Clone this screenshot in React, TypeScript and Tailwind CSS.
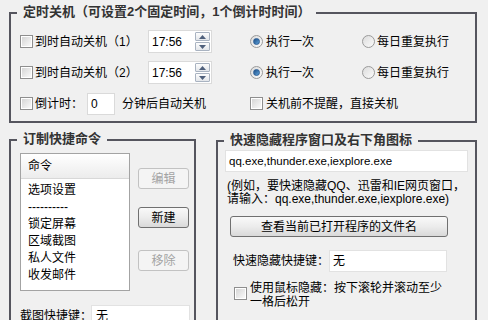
import React from "react";

const FONT = "font-['Tahoma','Liberation_Sans','Noto_Sans_CJK_SC',sans-serif]";

function Group({ title, className, children }: { title: string; className: string; children?: React.ReactNode }) {
  return (
    <div className={"relative border-2 border-[#55555e] " + className}>
      <div className="absolute left-[6px] top-[-10px] px-[6px] bg-[#f0f0f0] text-[13px] leading-[16px] font-bold text-[#333] whitespace-nowrap">
        {title}
      </div>
      {children}
    </div>
  );
}

function Checkbox() {
  return (
    <div className="w-[13px] h-[13px] shrink-0 border border-[#8e8e8e] bg-white p-[1px]">
      <div className="w-full h-full bg-gradient-to-br from-[#d6d6d6] to-[#f9f9f9]" />
    </div>
  );
}

function Radio({ checked }: { checked?: boolean }) {
  return (
    <div className="w-[13px] h-[13px] shrink-0 rounded-full border border-[#9a9a9a] bg-gradient-to-br from-[#dcdcdc] to-[#fbfbfb] flex items-center justify-center">
      {checked && (
        <div className="w-[7px] h-[7px] rounded-full bg-gradient-to-br from-[#1f4f86] to-[#5ea3dc] border border-[#2a5d96]" />
      )}
    </div>
  );
}

function Arrow({ up }: { up?: boolean }) {
  return (
    <svg width="7" height="4" viewBox="0 0 7 4">
      {up ? <path d="M0 4 L3.5 0 L7 4 Z" fill="#4f607c" /> : <path d="M0 0 L3.5 4 L7 0 Z" fill="#4f607c" />}
    </svg>
  );
}

function TimeInput() {
  return (
    <div className="w-[64px] h-[23px] shrink-0 bg-white border border-[#dadada] flex items-center justify-between">
      <span className="pl-[3px] text-[12px] leading-[14px]">17:56</span>
      <div className="flex flex-col gap-[1px] mr-[1px] w-[15px]">
        <div className="h-[9px] border border-[#a9b3c1] rounded-[1px] bg-gradient-to-b from-[#fdfdfd] to-[#e3e6ea] flex items-center justify-center">
          <Arrow up />
        </div>
        <div className="h-[9px] border border-[#a9b3c1] rounded-[1px] bg-gradient-to-b from-[#fdfdfd] to-[#e3e6ea] flex items-center justify-center">
          <Arrow />
        </div>
      </div>
    </div>
  );
}

function Btn({ label, disabled, className }: { label: string; disabled?: boolean; className: string }) {
  return (
    <div
      className={
        "flex items-center justify-center rounded-[3px] text-[12px] leading-[14px] " +
        (disabled
          ? "border border-[#c2c2c2] bg-[#f4f4f4] text-[#a3a3a3] "
          : "border border-[#707070] bg-gradient-to-b from-[#f9f9f9] via-[#ececec] to-[#d9d9d9] text-black ") +
        className
      }
    >
      {label}
    </div>
  );
}

export default function App() {
  return (
    <div className={"w-[488px] h-[320px] overflow-hidden bg-[#f0f0f0] text-black text-[12px] leading-[14px] " + FONT}>
      <div className="pl-[9px] pt-[12px]">
        <Group title="定时关机（可设置2个固定时间，1个倒计时时间）" className="w-[468px] h-[111px]">
          <div className="pt-[12px] pl-[9px]">
            {[1, 2].map((n) => (
              <div key={n} className="h-[31px] flex items-center">
                <div className="w-[128px] flex items-center">
                  <Checkbox />
                  <span className="ml-[2px]">到时自动关机（{n}）</span>
                </div>
                <TimeInput />
                <div className="ml-[38px] w-[112px] flex items-center">
                  <Radio checked />
                  <span className="ml-[3px]">执行一次</span>
                </div>
                <div className="flex items-center">
                  <Radio />
                  <span className="ml-[2px]">每日重复执行</span>
                </div>
              </div>
            ))}
            <div className="h-[31px] flex items-center">
              <div className="w-[230px] flex items-center">
                <Checkbox />
                <span className="ml-[2px] w-[52px] whitespace-nowrap">倒计时：</span>
                <div className="w-[28px] h-[22px] bg-white border border-[#dadada] flex items-center pl-[3px]">0</div>
                <span className="ml-[7px]">分钟后自动关机</span>
              </div>
              <Checkbox />
              <span className="ml-[3px]">关机前不提醒，直接关机</span>
            </div>
          </div>
        </Group>

        <div className="flex items-start gap-[20px] mt-[16px]">
          <Group title="订制快捷命令" className="w-[187px] h-[200px]">
            <div className="pl-[9px] pt-[12px]">
              <div className="flex items-start">
                <div className="w-[110px] h-[138px] bg-white border border-[#a3a3a3]">
                  <div className="h-[25px] flex items-center pl-[7px] bg-gradient-to-b from-[#ffffff] to-[#ececec] border-b border-[#d8d8d8]">
                    命令
                  </div>
                  <div className="pl-[7px] pt-[2px]">
                    {["选项设置", "----------", "锁定屏幕", "区域截图", "私人文件", "收发邮件"].map((t) => (
                      <div key={t} className="h-[17px] flex items-center">
                        {t}
                      </div>
                    ))}
                  </div>
                </div>
                <div className="ml-[8px] pt-[15px] flex flex-col">
                  <Btn label="编辑" disabled className="w-[51px] h-[21px]" />
                  <Btn label="新建" className="w-[51px] h-[21px] mt-[18px]" />
                  <Btn label="移除" disabled className="w-[51px] h-[21px] mt-[22px]" />
                </div>
              </div>
              <div className="flex items-center mt-[14px]">
                <span className="w-[71px] shrink-0 whitespace-nowrap">截图快捷键：</span>
                <div className="w-[99px] h-[22px] shrink-0 bg-white border border-[#e2e2e2] flex items-center pl-[4px]">无</div>
              </div>
            </div>
          </Group>

          <Group title="快速隐藏程序窗口及右下角图标" className="w-[261px] h-[200px] mt-[1px]">
            <div className="pl-[7px] pt-[8px]">
              <div className="w-[243px] h-[22px] bg-white border border-[#e2e2e2] flex items-center pl-[3px] text-[11.5px]">
                qq.exe,thunder.exe,iexplore.exe
              </div>
              <div className="mt-[8px] leading-[13px] pl-[2px] whitespace-nowrap">
                <div>(例如，要快速隐藏QQ、迅雷和IE网页窗口，</div>
                <div>请输入：qq.exe,thunder.exe,iexplore.exe)</div>
              </div>
              <Btn label="查看当前已打开程序的文件名" className="ml-[5px] mt-[10px] w-[218px] h-[21px]" />
              <div className="flex items-center mt-[13px] pl-[8px]">
                <span className="w-[96px] shrink-0 whitespace-nowrap">快速隐藏快捷键：</span>
                <div className="w-[118px] h-[22px] shrink-0 bg-white border border-[#e2e2e2] flex items-center pl-[3px]">无</div>
              </div>
              <div className="flex items-start mt-[9px] pl-[9px]">
                <div className="mt-[6px]">
                  <Checkbox />
                </div>
                <div className="ml-[3px] w-[196px] leading-[14px]">使用鼠标隐藏：按下滚轮并滚动至少一格后松开</div>
              </div>
            </div>
          </Group>
        </div>
      </div>
    </div>
  );
}
